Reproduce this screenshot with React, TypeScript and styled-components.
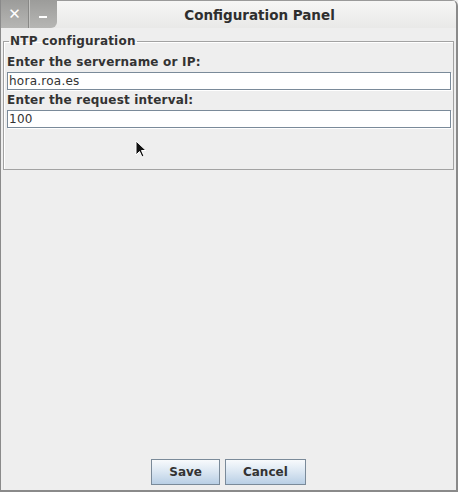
import React from "react";
import styled, { createGlobalStyle } from "styled-components";

const Global = createGlobalStyle`
  html, body { margin: 0; padding: 0; background: #eeeeee; }
  * { box-sizing: border-box; }
`;

const Window = styled.div`
  position: relative;
  width: 458px;
  height: 492px;
  display: flex;
  flex-direction: column;
  background: #eeeeee;
  border-left: 1px solid #8a8a8a;
  border-right: 2px solid #8a8a8a;
  border-bottom: 2px solid #8a8a8a;
  border-top-right-radius: 6px;
  overflow: hidden;
  font-family: "DejaVu Sans", sans-serif;
  color: #333333;
`;

const TitleBar = styled.div`
  height: 28px;
  flex: none;
  display: flex;
  align-items: stretch;
  background: linear-gradient(#f6f6f5, #e9e9e8);
  border-top: 1px solid #9a9a9a;
`;

const WinButtons = styled.div`
  display: flex;
  width: 56px;
  margin-top: -1px;
  border-bottom-right-radius: 6px;
  overflow: hidden;
  background: linear-gradient(#9c9c9a, #b6b6b4);
`;

const WinButton = styled.div<{ $divider?: boolean }>`
  width: 28px;
  display: flex;
  align-items: center;
  justify-content: center;
  color: #ffffff;
  font-family: "DejaVu Sans", sans-serif;
  font-weight: bold;
  font-size: 15px;
  border-right: ${(p) => (p.$divider ? "1px solid #888886" : "none")};
  box-shadow: ${(p) => (p.$divider ? "1px 0 0 #c4c4c2" : "none")};
`;

const Title = styled.div`
  flex: 1;
  display: flex;
  align-items: center;
  justify-content: center;
  padding-left: 6px;
  padding-top: 1px;
  font-family: "DejaVu Sans", sans-serif;
  font-weight: 700;
  font-size: 13.5px;
  color: #2e2e2e;
`;

const Fieldset = styled.fieldset`
  margin: 6px 2px 0 2px;
  padding: 7px 2px 38px 3px;
  min-width: 0;
  border: 1px solid #a2a2a2;
  box-shadow: inset 1px 1px 0 #ffffff;
  display: flex;
  flex-direction: column;
`;

const Legend = styled.legend`
  margin-left: 2px;
  padding: 0 1px;
  font-size: 12px;
  line-height: 14px;
  letter-spacing: 0.2px;
  font-weight: bold;
  color: #333333;
`;

const Label = styled.label`
  display: block;
  font-size: 12px;
  line-height: 14px;
  letter-spacing: 0.2px;
  font-weight: bold;
  color: #333333;
  margin-bottom: 3px;
`;

const Field = styled.input`
  display: block;
  width: 444px;
  height: 18px;
  margin: 0 0 3px 0;
  padding: 0 2px 0 1px;
  border: 1px solid #7a8a99;
  box-shadow: 1px 1px 0 #ffffff;
  background: #ffffff;
  font-family: "DejaVu Sans", sans-serif;
  font-size: 12px;
  line-height: 14px;
  letter-spacing: 0.25px;
  color: #333333;
  outline: none;
`;

const Spacer = styled.div`
  flex: 1;
`;

const ButtonRow = styled.div`
  display: flex;
  justify-content: center;
  gap: 5px;
  padding-bottom: 5px;
`;

const Button = styled.button`
  height: 26px;
  padding: 0 17px;
  border: 1px solid #7a8a99;
  border-radius: 0;
  background: linear-gradient(#f8fafc 0%, #dde8f3 45%, #b9cfe5 100%);
  font-family: "DejaVu Sans", sans-serif;
  font-weight: bold;
  font-size: 12px;
  color: #333333;
`;

const Cursor = styled.svg`
  position: absolute;
  left: 134px;
  top: 140px;
`;

export default function App() {
  return (
    <>
      <Global />
      <Window>
        <TitleBar>
          <WinButtons>
            <WinButton $divider>✕</WinButton>
            <WinButton>
              <svg width="10" height="10" viewBox="0 0 10 10">
                <rect x="1" y="7" width="8" height="2" fill="#ffffff" />
              </svg>
            </WinButton>
          </WinButtons>
          <Title>Configuration Panel</Title>
        </TitleBar>
        <Fieldset>
          <Legend>NTP configuration</Legend>
          <Label>Enter the servername or IP:</Label>
          <Field defaultValue="hora.roa.es" />
          <Label>Enter the request interval:</Label>
          <Field defaultValue="100" />
        </Fieldset>
        <Spacer />
        <ButtonRow>
          <Button>Save</Button>
          <Button>Cancel</Button>
        </ButtonRow>
        <Cursor width="14" height="20" viewBox="0 0 14 20">
          <path d="M1 1 L1 15 L4.5 11.5 L7 17 L9 16 L6.5 10.5 L11 10.5 Z" fill="#111" stroke="#fff" strokeWidth="1" />
        </Cursor>
      </Window>
    </>
  );
}
